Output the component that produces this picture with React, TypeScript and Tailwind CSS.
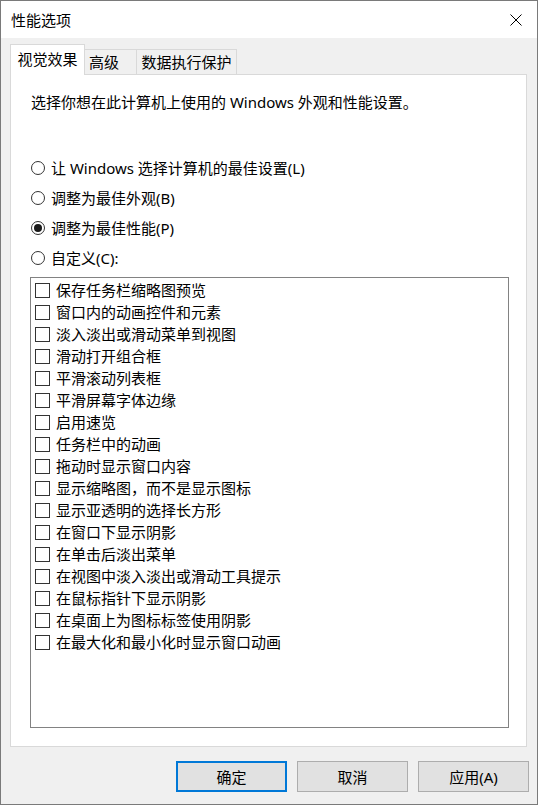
import React from "react";

const items = [
  "保存任务栏缩略图预览",
  "窗口内的动画控件和元素",
  "淡入淡出或滑动菜单到视图",
  "滑动打开组合框",
  "平滑滚动列表框",
  "平滑屏幕字体边缘",
  "启用速览",
  "任务栏中的动画",
  "拖动时显示窗口内容",
  "显示缩略图，而不是显示图标",
  "显示亚透明的选择长方形",
  "在窗口下显示阴影",
  "在单击后淡出菜单",
  "在视图中淡入淡出或滑动工具提示",
  "在鼠标指针下显示阴影",
  "在桌面上为图标标签使用阴影",
  "在最大化和最小化时显示窗口动画",
];

const radios = [
  { label: "让 Windows 选择计算机的最佳设置(L)", checked: false },
  { label: "调整为最佳外观(B)", checked: false },
  { label: "调整为最佳性能(P)", checked: true },
  { label: "自定义(C):", checked: false },
];

function Radio({ checked }: { checked: boolean }) {
  return (
    <span className="w-[14px] h-[14px] rounded-full border border-[#333333] bg-white flex items-center justify-center shrink-0">
      {checked && <span className="w-[8px] h-[8px] rounded-full bg-[#1a1a1a]" />}
    </span>
  );
}

export default function App() {
  return (
    <div
      className="w-[538px] h-[805px] border border-[#7a7a7a] bg-[#f0f0f0] flex flex-col text-black text-[15px] leading-[22px]"
      style={{ fontFamily: '"Noto Sans", "Noto Sans CJK SC", sans-serif' }}
    >
      {/* Title bar */}
      <div className="h-[37px] bg-white flex items-center justify-between pl-[10px] pr-[14px] shrink-0">
        <span>性能选项</span>
        <svg width="12" height="12" viewBox="0 0 12 12" className="mr-[1px]">
          <path d="M0.5 0.5 L11.5 11.5 M11.5 0.5 L0.5 11.5" stroke="#000" strokeWidth="1" />
        </svg>
      </div>

      {/* Body */}
      <div className="flex-1 flex flex-col pt-[6px] pl-[9px] pr-[10px]">
        {/* Tabs */}
        <div className="flex items-end h-[30px]">
          <div className="relative z-10 -mb-px h-[31px] w-[75px] bg-white border border-b-0 border-[#d9d9d9] flex items-center justify-center">
            <span className="-mt-[2px]">视觉效果</span>
          </div>
          <div className="h-[25px] w-[52px] border border-l-0 border-b-0 border-[#d9d9d9] bg-[#f0f0f0] flex items-center pl-[4px]">
            高级
          </div>
          <div className="h-[25px] w-[100px] border border-l-0 border-b-0 border-[#d9d9d9] bg-[#f0f0f0] flex items-center justify-center">
            数据执行保护
          </div>
        </div>

        {/* Panel */}
        <div className="h-[673px] bg-white border border-[#d9d9d9] flex flex-col pl-[20px] pr-[17px] pt-[16px]">
          <div>选择你想在此计算机上使用的 Windows 外观和性能设置。</div>

          <div className="mt-[44px] flex flex-col gap-[8px]">
            {radios.map((r) => (
              <div key={r.label} className="h-[22px] flex items-center gap-[6px]">
                <Radio checked={r.checked} />
                <span>{r.label}</span>
              </div>
            ))}
          </div>

          <div className="mt-[8px] -ml-px h-[451px] border border-[#828282] bg-white pt-[1px] pl-[4px] flex flex-col">
            {items.map((t) => (
              <div key={t} className="h-[22px] flex items-center gap-[6px]">
                <span className="w-[15px] h-[15px] border border-[#333333] bg-white shrink-0" />
                <span>{t}</span>
              </div>
            ))}
          </div>
        </div>

        {/* Buttons */}
        <div className="mt-[14px] flex justify-end gap-[10px] -mr-[2px]">
          <button className="w-[111px] h-[31px] bg-[#e1e1e1] border-2 border-[#0078d7] flex items-center justify-center">
            确定
          </button>
          <button className="w-[111px] h-[31px] bg-[#e1e1e1] border border-[#adadad] flex items-center justify-center">
            取消
          </button>
          <button className="w-[111px] h-[31px] bg-[#e1e1e1] border border-[#adadad] flex items-center justify-center">
            应用(A)
          </button>
        </div>
      </div>
    </div>
  );
}
